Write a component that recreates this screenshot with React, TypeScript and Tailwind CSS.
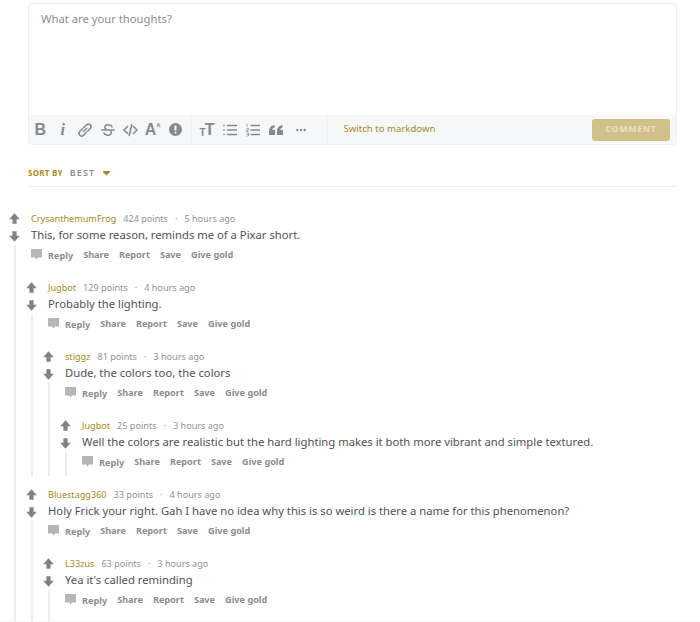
import React from "react";

type C = { user: string; pts: string; time: string; text: string; children?: C[]; more?: boolean };

const data: C[] = [
  {
    user: "CrysanthemumFrog", pts: "424 points", time: "5 hours ago", text: "This, for some reason, reminds me of a Pixar short.",
    children: [
      {
        user: "Jugbot", pts: "129 points", time: "4 hours ago", text: "Probably the lighting.",
        children: [
          {
            user: "stiggz", pts: "81 points", time: "3 hours ago", text: "Dude, the colors too, the colors",
            children: [
              { user: "Jugbot", pts: "25 points", time: "3 hours ago", text: "Well the colors are realistic but the hard lighting makes it both more vibrant and simple textured." },
            ],
          },
        ],
      },
      {
        user: "Bluestagg360", pts: "33 points", time: "4 hours ago", text: "Holy Frick your right. Gah I have no idea why this is so weird is there a name for this phenomenon?",
        children: [{ user: "L33zus", pts: "63 points", time: "3 hours ago", text: "Yea it's called reminding", more: true }],
      },
    ],
  },
];

function Arrow({ down }: { down?: boolean }) {
  return (
    <svg width="11" height="11" viewBox="0 0 11 11" className={down ? "rotate-180" : ""}>
      <path d="M5.500.3 10.800 6.200H7.600V10.700H3.400V6.200H.2Z" fill="#808285" />
    </svg>
  );
}

function Comment({ c }: { c: C }) {
  return (
    <div className="flex">
      <div className="flex w-[17px] shrink-0 flex-col items-center pt-[3px]">
        <Arrow />
        <div className="mt-[7px]"><Arrow down /></div>
        <div className="mt-[3px] w-0.5 flex-1 bg-[#e9edf1]" />
      </div>
      <div className="min-w-0 flex-1">
        <div className="pl-2">
          <div className="flex h-[16px] items-center whitespace-nowrap pt-[2px] text-[9.1px] text-[#919396]">
            <span className="text-[#a98a1e]">{c.user}</span>
            <span className="ml-[7px]">{c.pts}</span>
            <span className="mx-[7px]">·</span>
            <span>{c.time}</span>
          </div>
          <div className="h-[18px] whitespace-nowrap text-[11.25px] leading-[18px] text-[#505255]">{c.text}</div>
          <div className="flex h-[21px] items-center gap-[10px] whitespace-nowrap text-[9.15px] font-bold text-[#8b8d90]">
            <span className="flex items-center gap-[6px]">
              <svg width="11" height="11" viewBox="0 0 11 11"><path d="M.5 0h10q.5 0 .5.500V8q0 .5-.5.5H7L5.500 10.500 4 8.500H.5Q0 8.500 0 8V.5Q0 0 .5 0Z" fill="#b4b6b8" /></svg>
              <span className="mt-[2px]">Reply</span>
            </span>
            <span>Share</span><span>Report</span><span>Save</span><span>Give gold</span>
          </div>
        </div>
        <div className={c.children ? "flex flex-col gap-[10px] pt-[14px]" : c.more ? "pt-[40px]" : "pt-[4px]"}>
          {c.children?.map((k, i) => <Comment key={i} c={k} />)}
        </div>
      </div>
    </div>
  );
}

const Icon = ({ children, w = 16 }: { children: React.ReactNode; w?: number }) => (
  <svg width={w} height="16" viewBox={`0 0 ${w} 16`} fill="none" stroke="#878a8c" strokeWidth="1.6" strokeLinecap="round" strokeLinejoin="round">{children}</svg>
);

const Cell = ({ children }: { children: React.ReactNode }) => (
  <div className="flex h-full w-[22.5px] shrink-0 items-center justify-center">{children}</div>
);

export default function App() {
  return (
    <div className="relative h-[622px] w-[700px] overflow-hidden bg-white font-['Noto_Sans',sans-serif]">
      <div className="ml-7 mr-[23px] mt-[3px] rounded-[4px] border border-[#edeff1]">
        <div className="h-[111px] px-3 pt-[6px] text-[11.25px] leading-[18px] text-[#8b8d90]">What are your thoughts?</div>
        <div className="flex h-[29px] items-center bg-[#f6f7f8] pr-[6px]">
          <div className="flex h-full items-center border-r border-[#edeff1] pr-[4px]">
            <Cell><span className="font-['Liberation_Sans',sans-serif] text-[16px] font-bold text-[#878a8c]">B</span></Cell>
            <Cell><span className="font-['Liberation_Serif',serif] text-[16px] font-bold italic text-[#878a8c]">i</span></Cell>
            <Cell>
              <Icon><path d="M6.500 9.500 9.500 6.500M5.500 6.800 2.800 9.500a2.600 2.600 0 0 0 3.700 3.700L9.200 10.500M6.800 5.500 9.500 2.800a2.600 2.600 0 0 1 3.700 3.700L10.500 9.200" /></Icon>
            </Cell>
            <Cell>
              <Icon w={14}><path d="M.8 8h12.400M11 4.800C10.300 2.800 7 2.500 5.500 3 3.300 3.700 3.300 6.300 5 7M3 11c.7 2 4 2.500 5.500 2 2-.7 2.200-2.700 1.500-3.500" /></Icon>
            </Cell>
            <Cell>
              <Icon w={15}><path d="M4.500 4.500 1 8l3.500 3.500M10.500 4.500 14 8l-3.500 3.500M8.800 2.500 6.200 13.500" /></Icon>
            </Cell>
            <Cell>
              <span className="flex items-start font-['Liberation_Sans',sans-serif] font-bold text-[#878a8c]"><span className="text-[16px] leading-none">A</span><span className="text-[6px] leading-none">A</span></span>
            </Cell>
            <Cell>
              <svg width="13" height="13" viewBox="0 0 13 13"><circle cx="6.500" cy="6.500" r="6.500" fill="#878a8c" /><rect x="5.500" y="2.500" width="2" height="5" rx=".5" fill="#f6f7f8" /><rect x="5.500" y="8.500" width="2" height="2" rx="1" fill="#f6f7f8" /></svg>
            </Cell>
          </div>
          <div className="flex h-full items-center border-r border-[#edeff1] pl-[4px] pr-[12px]">
            <div className="flex h-full w-[23px] shrink-0 items-center justify-center">
              <span className="flex items-end font-['Liberation_Sans',sans-serif] font-bold leading-none text-[#878a8c]"><span className="text-[10px]">T</span><span className="-ml-px text-[16px]">T</span></span>
            </div>
            <div className="flex h-full w-[23px] shrink-0 items-center justify-center">
              <Icon w={14}><path d="M4.500 3.500h9M4.500 8h9M4.500 12.500h9M.9 3.500h.2M.9 8h.2M.9 12.500h.2" /></Icon>
            </div>
            <div className="flex h-full w-[23px] shrink-0 items-center justify-center">
              <svg width="14" height="16" viewBox="0 0 14 16" fill="none" stroke="#878a8c">
                <path d="M4.500 3.500H14M4.500 8H14M4.500 12.500H14" strokeWidth="1.400" />
                <path d="M1 1.500v3.500M.5 6.500h2v1.500h-2v1.500h2M.5 11h2v3h-2M.8 12.500h1.500" strokeWidth=".7" />
              </svg>
            </div>
            <div className="flex h-full w-[23px] shrink-0 items-center justify-center">
              <svg width="14" height="14" viewBox="0 0 14 14" fill="#878a8c"><path d="M0 8C0 4.500 2 2.500 5.500 2v2.500C4 5 3.300 5.700 3 6.700h3V12H0ZM8 8c0-3.500 2-5.500 5.500-6v2.500c-1.500.5-2.200 1.200-2.500 2.200h3V12H8Z" /></svg>
            </div>
            <div className="flex h-full w-[27px] shrink-0 items-center justify-center">
              <svg width="10" height="14" viewBox="0 0 10 14" fill="#878a8c"><circle cx="1.300" cy="7" r="1.200" /><circle cx="5" cy="7" r="1.200" /><circle cx="8.700" cy="7" r="1.200" /></svg>
            </div>
          </div>
          <span className="ml-[16px] text-[9.6px] text-[#a98a1e]">Switch to markdown</span>
          <span className="ml-auto flex h-[22px] w-[78px] items-center justify-center rounded-[3px] bg-[#d2c08a] text-[8.8px] font-bold tracking-[0.08em] text-[#e9e0c4]">COMMENT</span>
        </div>
      </div>
      <div className="ml-7 mr-[23px] mt-[22px] flex h-[20px] items-start border-b border-[#edeff1] text-[8px] font-bold">
        <span className="tracking-[0.03em] text-[#a98a1e]">SORT BY</span>
        <span className="ml-[7px] text-[9px] font-semibold leading-[12px] tracking-[0.13em] text-[#8b8d90]">BEST</span>
        <svg className="ml-[8px] mt-[4px]" width="7" height="5" viewBox="0 0 7 5"><path d="M0 0h7v1L3.500 4.500 0 1Z" fill="#a98a1e" /></svg>
      </div>
      <div className="ml-[6px] mt-[23px]">
        {data.map((c, i) => <Comment key={i} c={c} />)}
      </div>
      <div className="absolute inset-x-0 bottom-0 h-px bg-[#f3f4f5]" />
    </div>
  );
}
